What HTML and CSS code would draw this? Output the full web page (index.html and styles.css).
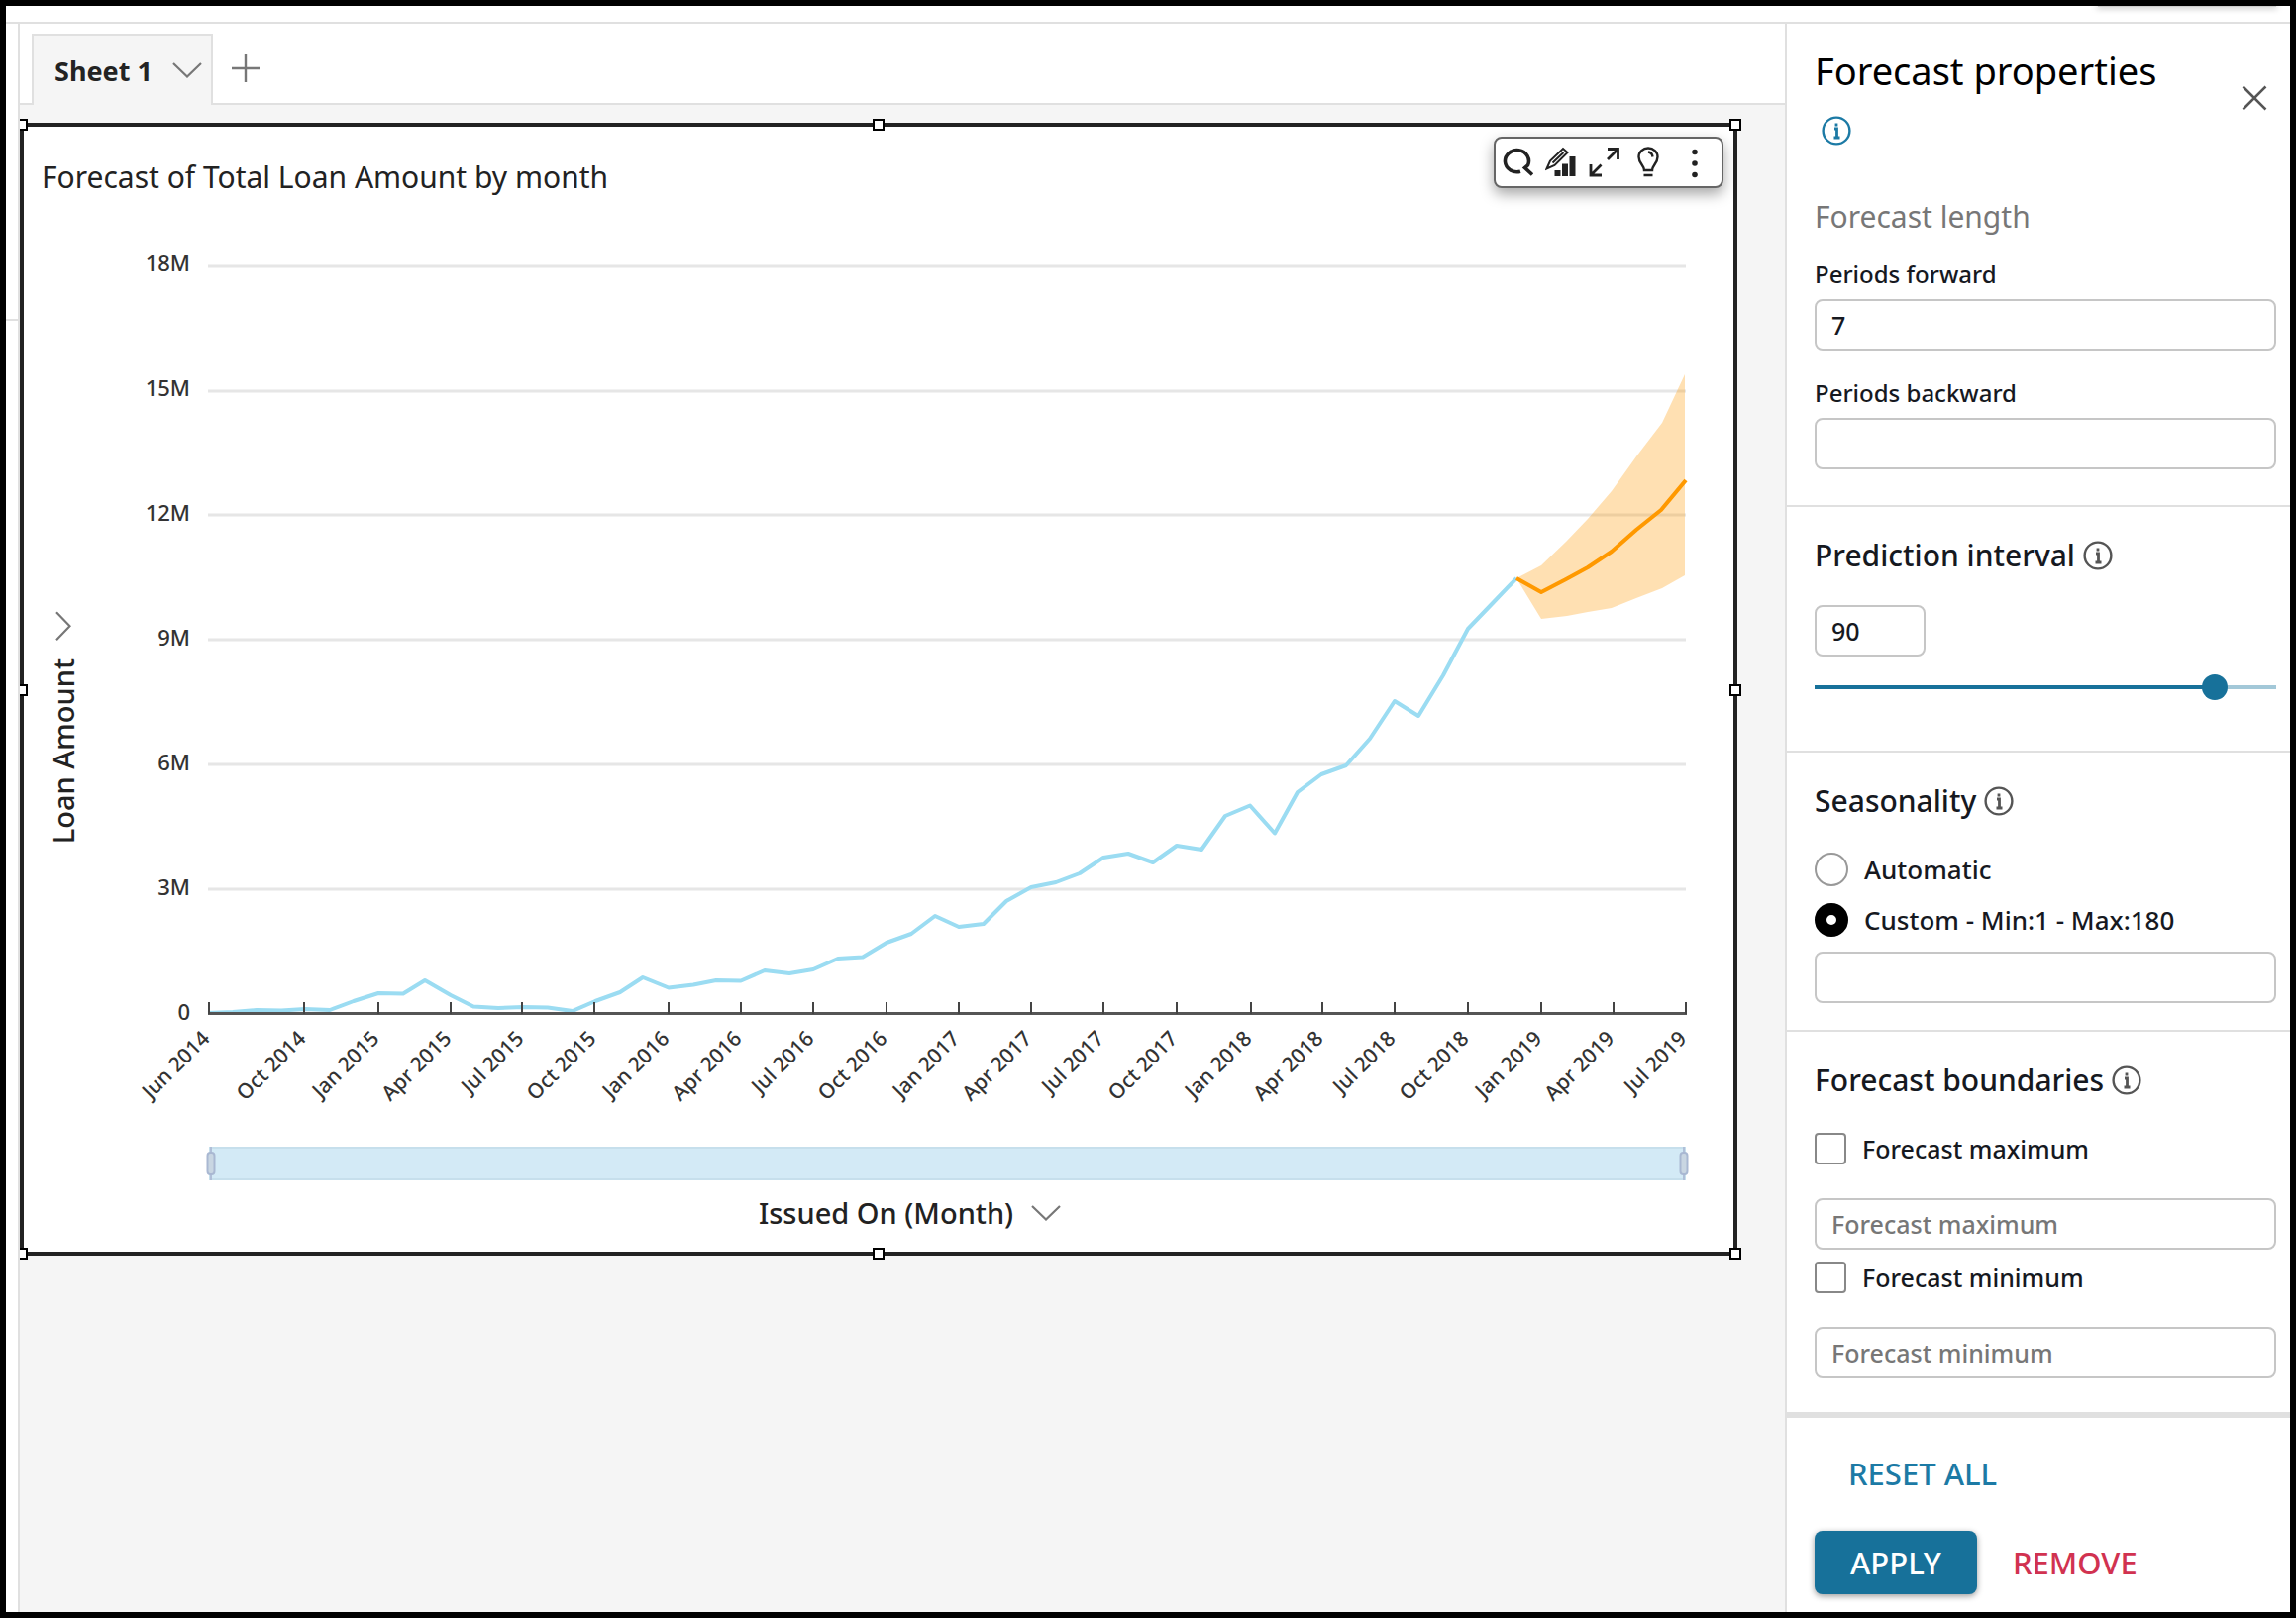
FILE: index.html
```html
<!DOCTYPE html>
<html lang="en">
<head>
<meta charset="utf-8">
<title>Forecast of Total Loan Amount by month</title>
<link rel="stylesheet" href="styles.css">
</head>
<body>
<svg class="defs" aria-hidden="true">
  <symbol id="info" viewBox="0 0 30 30">
    <circle cx="15" cy="15" r="13.4" fill="none" stroke="currentColor" stroke-width="2.4"/>
    <path d="M13 13h2.500v9M12.500 22h6M15 7.500v3" fill="none" stroke="currentColor" stroke-width="2.800"/>
  </symbol>
  <symbol id="chevron" viewBox="0 0 30 16">
    <path d="M1 1l14 13.500L29 1" fill="none" stroke="currentColor" stroke-width="2.200"/>
  </symbol>
</svg>
<div class="app">
  <header class="topbar"><span class="menu-edge"></span></header>
  <div class="rail"><span class="rail-line"></span></div>
  <main class="workspace">
    <nav class="tabs">
      <button class="tab" type="button">Sheet 1 <svg class="chevron"><use href="#chevron"/></svg></button>
      <button class="add" type="button" aria-label="Add sheet"><svg width="30" height="30" viewBox="0 0 30 30"><path d="M15 1v28M1 15h28" stroke="currentColor" stroke-width="2.400"/></svg></button>
    </nav>
    <div class="canvas">
      <section class="visual">
        <h1 class="visual-title">Forecast of Total Loan Amount by month</h1>
        <div class="plot-row">
          <button class="axis-title axis-y" type="button">Loan Amount <svg class="chevron-side" viewBox="0 0 16 30"><path d="M15 1L1.500 15L15 29" fill="none" stroke="currentColor" stroke-width="2.200"/></svg></button>
          <svg class="plot" viewBox="100 240 1650 960">
            <path class="grid" d="M210 269H1702M210 395H1702M210 520H1702M210 646H1702M210 772H1702M210 898H1702"/>
            <g class="y-labels">
              <text x="192" y="274">18M</text><text x="192" y="400">15M</text><text x="192" y="526">12M</text><text x="192" y="652">9M</text><text x="192" y="778">6M</text><text x="192" y="904">3M</text><text x="192" y="1030">0</text>
            </g>
            <path class="band" d="M1531 584L1556 571L1581 547L1603 524L1627 496L1652 461L1678 427L1701 378V581L1678 594L1652 604L1627 614L1603 618L1582 622L1556 625Z"/>
            <path class="actual" d="M210 1023L235 1022L259 1020L284 1020.500L308 1019L333 1020L357 1011L382 1003L407 1003.500L429 990L455 1005L478 1016.500L503 1018L528 1017L553 1017.500L578 1021L601 1011L626 1002L649 987L675 997.500L700 994.500L723 990L748 990.500L772 980L797 983L821 979L846 968L871 966.500L895 952L920 943L944 925L968 936L993 933L1016 910L1041 896L1066 891L1090 882L1114 866L1139 862L1164 871L1188 854L1213 858L1237 824L1262 813.500L1287 841.500L1310 800L1334 782L1359 773L1383 746L1408 708L1432 723L1457 682L1482 635L1507 609L1531 584"/>
            <path class="forecast" d="M1531 584L1556 598L1581 585L1603 573L1627 557L1652 535L1677 515L1702 485"/>
            <path class="axis" d="M210 1023.500H1703"/>
            <path class="ticks" d="M211 1012v12M307 1012v12M382 1012v12M455 1012v12M527 1012v12M600 1012v12M675 1012v12M748 1012v12M821 1012v12M895 1012v12M968 1012v12M1041 1012v12M1114 1012v12M1188 1012v12M1263 1012v12M1335 1012v12M1408 1012v12M1482 1012v12M1556 1012v12M1629 1012v12M1702 1012v12"/>
            <g class="x-labels">
              <text transform="translate(213 1050) rotate(-45)">Jun 2014</text>
              <text transform="translate(310 1050) rotate(-45)">Oct 2014</text>
              <text transform="translate(384 1050) rotate(-45)">Jan 2015</text>
              <text transform="translate(457 1050) rotate(-45)">Apr 2015</text>
              <text transform="translate(530 1050) rotate(-45)">Jul 2015</text>
              <text transform="translate(603 1050) rotate(-45)">Oct 2015</text>
              <text transform="translate(677 1050) rotate(-45)">Jan 2016</text>
              <text transform="translate(750 1050) rotate(-45)">Apr 2016</text>
              <text transform="translate(823 1050) rotate(-45)">Jul 2016</text>
              <text transform="translate(897 1050) rotate(-45)">Oct 2016</text>
              <text transform="translate(970 1050) rotate(-45)">Jan 2017</text>
              <text transform="translate(1043 1050) rotate(-45)">Apr 2017</text>
              <text transform="translate(1116 1050) rotate(-45)">Jul 2017</text>
              <text transform="translate(1190 1050) rotate(-45)">Oct 2017</text>
              <text transform="translate(1265 1050) rotate(-45)">Jan 2018</text>
              <text transform="translate(1337 1050) rotate(-45)">Apr 2018</text>
              <text transform="translate(1410 1050) rotate(-45)">Jul 2018</text>
              <text transform="translate(1484 1050) rotate(-45)">Oct 2018</text>
              <text transform="translate(1558 1050) rotate(-45)">Jan 2019</text>
              <text transform="translate(1631 1050) rotate(-45)">Apr 2019</text>
              <text transform="translate(1704 1050) rotate(-45)">Jul 2019</text>
            </g>
            <rect class="zoombar" x="212" y="1159" width="1489" height="32"/>
            <path class="zoomend" d="M213 1158v34M1700 1158v34"/>
            <rect class="zoomgrip" x="209.500" y="1164" width="7" height="22" rx="3"/>
            <rect class="zoomgrip" x="1696.500" y="1164" width="7" height="22" rx="3"/>
          </svg>
        </div>
        <button class="axis-title axis-x" type="button">Issued On (Month) <svg class="chevron"><use href="#chevron"/></svg></button>
        <div class="toolbar">
          <button type="button" aria-label="Search"><svg viewBox="0 0 32 32"><path d="M19 25.200A12 11 0 1 1 26.500 19L23.500 21.500L31 28.500" fill="none" stroke="currentColor" stroke-width="3.600"/></svg></button>
          <button type="button" aria-label="Format visual"><svg viewBox="0 0 32 32"><path d="M1.500 22.500L5 14.500L18 2L22.500 6L9.500 19ZM7.500 16.500L18.500 6" fill="none" stroke="currentColor" stroke-width="2"/><path d="M9.500 24h6v6h-6zM17 17.500h6V30h-6zM24.500 10h6v20h-6z" fill="currentColor"/></svg></button>
          <button type="button" aria-label="Maximize"><svg viewBox="0 0 32 32"><path d="M19 13L30 2M19 2.500h10.500v10.500M12.500 18.500L2 29M2 18v11h11" fill="none" stroke="currentColor" stroke-width="2.800"/></svg></button>
          <button type="button" aria-label="Insights"><svg viewBox="0 0 32 32"><path d="M12 24C12 19 6.500 17 6.500 10.500a9.500 9 0 0 1 19 0C25.500 17 20 19 20 24ZM16 5.500q4 .5 4.500 5M11.500 29h9" fill="none" stroke="currentColor" stroke-width="2.400"/></svg></button>
          <button type="button" aria-label="Menu"><svg viewBox="0 0 32 32"><g fill="currentColor"><circle cx="19" cy="5.500" r="2.800"/><circle cx="19" cy="17" r="2.800"/><circle cx="19" cy="28.500" r="2.800"/></g></svg></button>
        </div>
        <i class="handle n"></i><i class="handle ne"></i><i class="handle e"></i><i class="handle se"></i><i class="handle s"></i>
        <i class="handle half nw"></i><i class="handle half w"></i><i class="handle half sw"></i>
      </section>
    </div>
  </main>
  <aside class="panel">
    <section class="group">
      <div class="panel-head">
        <h2>Forecast properties</h2>
        <button class="close" type="button" aria-label="Close"><svg width="26" height="26" viewBox="0 0 26 26"><path d="M1.500 1.500l23 23M24.500 1.500l-23 23" stroke="currentColor" stroke-width="2.600"/></svg></button>
      </div>
      <svg class="info info-blue"><use href="#info"/></svg>
      <h3 class="muted">Forecast length</h3>
      <label class="field-label" for="forward">Periods forward</label>
      <input class="field" id="forward" type="text" value="7">
      <label class="field-label" for="backward">Periods backward</label>
      <input class="field" id="backward" type="text">
    </section>
    <section class="group interval">
      <h3>Prediction interval <svg class="info"><use href="#info"/></svg></h3>
      <input class="field short" type="text" value="90" aria-label="Prediction interval">
      <input class="slider" type="range" min="50" max="95" value="90" aria-label="Prediction interval slider">
    </section>
    <section class="group seasonality">
      <h3>Seasonality <svg class="info"><use href="#info"/></svg></h3>
      <label class="option"><input type="radio" name="season"><span>Automatic</span></label>
      <label class="option"><input type="radio" name="season" checked><span>Custom - Min:1 - Max:180</span></label>
      <input class="field" type="text" aria-label="Custom seasonality">
    </section>
    <section class="group bounds">
      <h3>Forecast boundaries <svg class="info"><use href="#info"/></svg></h3>
      <label class="check"><input type="checkbox"><span>Forecast maximum</span></label>
      <input class="field" type="text" placeholder="Forecast maximum" aria-label="Maximum value">
      <label class="check"><input type="checkbox"><span>Forecast minimum</span></label>
      <input class="field" type="text" placeholder="Forecast minimum" aria-label="Minimum value">
    </section>
    <footer class="actions">
      <button class="text-btn" type="button">RESET ALL</button>
      <div class="action-row">
        <button class="apply" type="button">APPLY</button>
        <button class="text-btn danger" type="button">REMOVE</button>
      </div>
    </footer>
  </aside>
</div>
</body>
</html>
```
FILE: styles.css
```css
* { box-sizing: border-box; }

body {
  margin: 0;
  min-height: 100vh;
  display: flex;
  border: 6px solid #000;
  background: #fff;
  color: #16191f;
  font-family: "Noto Sans", "Open Sans", sans-serif;
  font-weight: 500;
}

button {
  padding: 0;
  border: 0;
  background: none;
  color: inherit;
  font: inherit;
}

h1, h2, h3 { margin: 0; font-weight: 400; }
h3 { font-weight: 500; }

.defs { position: absolute; width: 0; height: 0; }

.app {
  flex: 1;
  display: grid;
  grid-template-columns: 14px minmax(0, 1fr) 510px;
  grid-template-rows: 18px 1fr;
}

.topbar {
  grid-column: 1 / -1;
  display: flex;
  justify-content: flex-end;
  padding-right: 14px;
  border-bottom: 2px solid #e0e0e0;
  overflow: hidden;
}
.menu-edge {
  width: 180px;
  height: 1px;
  background: #ccc;
  box-shadow: 0 0 6px 1px #aaa;
}

.rail { border-right: 2px solid #e0e0e0; }
.rail-line { display: block; height: 300px; border-bottom: 2px solid #e0e0e0; }

.workspace {
  display: flex;
  flex-direction: column;
  background: #f5f5f5;
}

.tabs {
  display: flex;
  align-items: flex-end;
  height: 82px;
  padding-left: 12px;
  border-bottom: 2px solid #e0e0e0;
  background: #fff;
}
.tab {
  display: flex;
  align-items: center;
  gap: 20px;
  height: 72px;
  margin-bottom: -2px;
  padding: 0 9px 0 21px;
  border: 2px solid #e0e0e0;
  border-bottom: 0;
  background: #f5f5f5;
  font-size: 27px;
  font-weight: 700;
  color: #232323;
}
.add { height: 70px; padding: 0 18px; color: #777; }
.add svg { display: block; }
.chevron { width: 30px; height: 16px; color: #777; }

.canvas { padding: 18px 48px 0 0; }

.visual {
  position: relative;
  border: 4px solid #222;
  background: #fff;
  color: #222;
}
.visual-title {
  height: 112px;
  padding: 31px 18px 0;
  font-size: 30px;
  line-height: 40px;
}

.plot-row { display: flex; align-items: center; }
.plot { flex: 1; min-width: 0; display: block; }

.axis-title {
  display: flex;
  align-items: center;
  gap: 18px;
  font-size: 29px;
  line-height: 40px;
}
.axis-y {
  width: 76px;
  margin-top: 30px;
  padding-right: 4px;
  writing-mode: vertical-rl;
  transform: rotate(180deg);
}
.chevron-side { width: 16px; height: 30px; color: #777; }
.axis-x { height: 64px; padding: 0 0 14px 742px; }

.grid { stroke: #e6e6e6; stroke-width: 3; }
.y-labels { font-size: 22px; text-anchor: end; fill: #333; }
.x-labels { font-size: 21px; text-anchor: end; fill: #333; }
.band { fill: #ff9900; fill-opacity: .3; }
.actual, .forecast { fill: none; stroke-width: 4; stroke-linejoin: round; }
.actual { stroke: #9bdcf2; }
.forecast { stroke: #ff9900; }
.axis { stroke: #555; stroke-width: 3; }
.ticks { stroke: #444; stroke-width: 2; }
.zoombar { fill: #d3eaf6; stroke: #c6dfec; stroke-width: 2; }
.zoomend { stroke: #b0bfd8; stroke-width: 2; }
.zoomgrip { fill: #c9d6e2; stroke: #a9b8d2; stroke-width: 2; }

.toolbar {
  position: absolute;
  top: 10px;
  right: 10px;
  display: flex;
  align-items: center;
  gap: 12px;
  width: 232px;
  height: 52px;
  padding-left: 6px;
  border: 2px solid #666;
  border-radius: 8px;
  background: #fff;
  box-shadow: 0 6px 14px rgba(0, 0, 0, .35);
}
.toolbar svg { display: block; width: 32px; height: 32px; }

.handle {
  position: absolute;
  width: 12px;
  height: 12px;
  border: 2px solid #000;
  background: #fff;
}
.half { left: -4px; width: 8px; border-left: 0; }
.n, .ne, .nw { top: -8px; }
.s, .se, .sw { bottom: -8px; }
.e, .w { top: calc(50% - 5px); }
.n, .s { left: calc(50% - 6px); }
.e, .ne, .se { right: -8px; }

.panel { border-left: 2px solid #e0e0e0; background: #fff; }
.group {
  display: flex;
  flex-direction: column;
  align-items: flex-start;
  padding: 28px 14px 36px 28px;
  border-bottom: 2px solid #e0e0e0;
}
.group:first-child { padding-top: 23px; }
.panel-head { display: flex; align-self: stretch; justify-content: space-between; }
h2 { font-size: 38px; line-height: 48px; color: #000; }
.close { align-self: flex-end; height: 26px; margin: 0 9px -17px 0; color: #555; }
.close svg { display: block; }
h3 { display: flex; align-items: center; gap: 8px; font-size: 30px; line-height: 42px; }
.muted { margin: 51px 0 -6px; color: #777; font-weight: 400; }
.info { width: 30px; height: 30px; color: #555; }
.info-blue { margin: 22px 0 0 7px; color: #1c7aa5; }

.field-label { margin: 27px 0 9px; font-size: 24px; line-height: 32px; }
.field {
  width: 100%;
  height: 52px;
  padding: 0 15px;
  border: 2px solid #c6c6c6;
  border-radius: 8px;
  background: #fff;
  color: #16191f;
  font: 500 25px "Noto Sans", "Open Sans", sans-serif;
}
.field::placeholder { color: #777; opacity: 1; }
.short { width: 112px; margin: 29px 0 18px; }

.interval { padding-bottom: 51px; }
.slider {
  appearance: none;
  width: 100%;
  height: 26px;
  margin: 0;
  background: linear-gradient(to right, #17719a 87%, #a3c8d8 87%) center / 100% 4px no-repeat;
}
.slider::-webkit-slider-thumb {
  appearance: none;
  width: 26px;
  height: 26px;
  border-radius: 50%;
  background: #17719a;
}

.seasonality { padding-bottom: 27px; }
.seasonality h3 { margin-bottom: 14px; }
.option, .check { display: flex; align-items: center; gap: 16px; }
.option { margin-top: 17px; font-size: 26px; line-height: 34px; }
.option input {
  appearance: none;
  width: 34px;
  height: 34px;
  margin: 0;
  border: 2px solid #999;
  border-radius: 50%;
}
.option input:checked { border: 12px solid #000; }
.seasonality .field { margin-top: 15px; }

.bounds { padding-bottom: 34px; border-bottom-width: 6px; }
.bounds h3 { margin-bottom: 20px; }
.check { margin: 12px 0 34px; font-size: 25px; line-height: 32px; }
.check input {
  appearance: none;
  width: 32px;
  height: 32px;
  margin: 0;
  border: 2px solid #888;
  border-radius: 4px;
}

.actions { padding: 24px 28px 16px; font-size: 31px; }
.action-row { display: flex; gap: 2px; margin-top: 26px; }
.text-btn { height: 64px; padding: 0 34px; color: #1c7aa5; }
.danger { color: #d13250; }
.apply {
  width: 164px;
  height: 64px;
  border-radius: 8px;
  background: #17719a;
  color: #fff;
  box-shadow: 0 2px 6px rgba(0, 0, 0, .4);
}
```
